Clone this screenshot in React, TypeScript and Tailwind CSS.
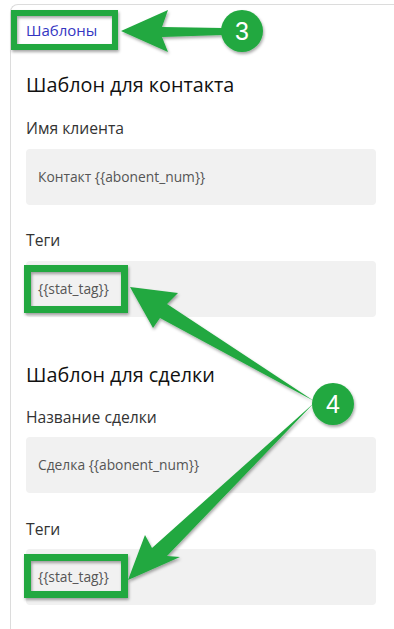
import React from "react";

const font = { fontFamily: "'Open Sans', 'Noto Sans', sans-serif" };

function Field({ label, value, labelMt, inputMt }: { label: string; value: string; labelMt: string; inputMt: string }) {
  return (
    <>
      <div className={`${labelMt} text-[15.7px] leading-[20px] text-[#333]`}>{label}</div>
      <div className={`${inputMt} h-[56px] w-[350px] rounded-[4px] bg-[#f1f1f1] flex items-center pl-[12px] text-[13.8px] text-[#555]`}>
        {value}
      </div>
    </>
  );
}

export default function App() {
  const green = "#20a83f";
  return (
    <div className="relative w-[394px] h-[629px] bg-white overflow-hidden" style={font}>
      <div className="ml-[10px] mt-[4px] h-[640px] border-l border-t border-[#dcdcdc] rounded-tl-[8px] pl-[15px] pt-[15px]">
        <div className="text-[15px] leading-[20px] text-[#3436c2]">Шаблоны</div>
        <div className="mt-[33px] text-[19.8px] leading-[24px] font-medium text-[#111]">Шаблон для контакта</div>
        <Field label="Имя клиента" value="Контакт {{abonent_num}}" labelMt="mt-[21px]" inputMt="mt-[11px]" />
        <Field label="Теги" value="{{stat_tag}}" labelMt="mt-[25px]" inputMt="mt-[11px]" />
        <div className="mt-[46px] text-[19.8px] leading-[24px] font-medium text-[#111]">Шаблон для сделки</div>
        <Field label="Название сделки" value="Сделка {{abonent_num}}" labelMt="mt-[20px]" inputMt="mt-[10px]" />
        <Field label="Теги" value="{{stat_tag}}" labelMt="mt-[26px]" inputMt="mt-[10px]" />
      </div>

      <svg className="absolute inset-0 pointer-events-none" width="394" height="629" viewBox="0 0 394 629">
        <defs>
          <filter id="sh" x="-20%" y="-20%" width="140%" height="140%">
            <feDropShadow dx="1" dy="2" stdDeviation="1.6" floodColor="#000" floodOpacity="0.35" />
          </filter>
        </defs>
        <g filter="url(#sh)" fill={green}>
          <rect x="14" y="13" width="101" height="34" fill="none" stroke={green} strokeWidth="6" />
          <rect x="27.5" y="268.5" width="97" height="41" fill="none" stroke={green} strokeWidth="7" />
          <rect x="27.5" y="557.5" width="97" height="37" fill="none" stroke={green} strokeWidth="7" />
          <polygon points="121,31 168,10 162,27 222,28 222,35 162,37 168,52" />
          <circle cx="242" cy="31" r="21" />
          <polygon points="130,287 178,293 167,304 314,401 160,318 153,328" />
          <polygon points="128,580 145,535 152,548 314,403 167,556 180,557" />
          <circle cx="333" cy="404" r="21" />
        </g>
        <text x="242" y="40" textAnchor="middle" fontSize="25" fill="#fff" fontFamily="Arial, 'Liberation Sans', sans-serif">3</text>
        <text x="333" y="413" textAnchor="middle" fontSize="25" fill="#fff" fontFamily="Arial, 'Liberation Sans', sans-serif">4</text>
      </svg>
    </div>
  );
}
